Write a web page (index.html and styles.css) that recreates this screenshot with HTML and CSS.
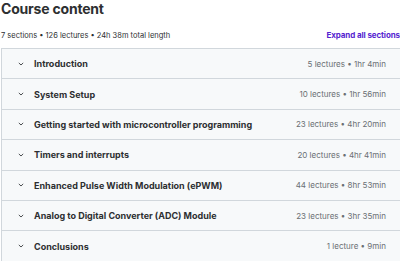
FILE: index.html
```html
<!DOCTYPE html>
<html>
   <head>
       <title>Course content</title>
       <link rel="stylesheet" href="styles.css">
   </head>
   <body>
        <div class="page">
            <h2 class="title">Course content</h2>
            <div class="summary">
                <span class="stats">7 sections &bull; 126 lectures &bull; 24h 38m total length</span>
                <span class="expand">Expand all sections</span>
            </div>

            <div class="sections">
                <div class="row">
                    <span class="chev"><svg width="6" height="4" viewBox="0 0 6 4"><path d="M0.8 0.9 L3 3 L5.2 0.9" fill="none" stroke="#4a4d50" stroke-width="1"/></svg></span>
                    <span class="name">Introduction</span>
                    <span class="meta">5 lectures &bull; 1hr 4min</span>
                </div>
                <div class="row">
                    <span class="chev"><svg width="6" height="4" viewBox="0 0 6 4"><path d="M0.8 0.9 L3 3 L5.2 0.9" fill="none" stroke="#4a4d50" stroke-width="1"/></svg></span>
                    <span class="name">System Setup</span>
                    <span class="meta">10 lectures &bull; 1hr 56min</span>
                </div>
                <div class="row">
                    <span class="chev"><svg width="6" height="4" viewBox="0 0 6 4"><path d="M0.8 0.9 L3 3 L5.2 0.9" fill="none" stroke="#4a4d50" stroke-width="1"/></svg></span>
                    <span class="name">Getting started with microcontroller programming</span>
                    <span class="meta">23 lectures &bull; 4hr 20min</span>
                </div>
                <div class="row">
                    <span class="chev"><svg width="6" height="4" viewBox="0 0 6 4"><path d="M0.8 0.9 L3 3 L5.2 0.9" fill="none" stroke="#4a4d50" stroke-width="1"/></svg></span>
                    <span class="name">Timers and interrupts</span>
                    <span class="meta">20 lectures &bull; 4hr 41min</span>
                </div>
                <div class="row">
                    <span class="chev"><svg width="6" height="4" viewBox="0 0 6 4"><path d="M0.8 0.9 L3 3 L5.2 0.9" fill="none" stroke="#4a4d50" stroke-width="1"/></svg></span>
                    <span class="name">Enhanced Pulse Width Modulation (ePWM)</span>
                    <span class="meta">44 lectures &bull; 8hr 53min</span>
                </div>
                <div class="row">
                    <span class="chev"><svg width="6" height="4" viewBox="0 0 6 4"><path d="M0.8 0.9 L3 3 L5.2 0.9" fill="none" stroke="#4a4d50" stroke-width="1"/></svg></span>
                    <span class="name">Analog to Digital Converter (ADC) Module</span>
                    <span class="meta">23 lectures &bull; 3hr 35min</span>
                </div>
                <div class="row">
                    <span class="chev"><svg width="6" height="4" viewBox="0 0 6 4"><path d="M0.8 0.9 L3 3 L5.2 0.9" fill="none" stroke="#4a4d50" stroke-width="1"/></svg></span>
                    <span class="name">Conclusions</span>
                    <span class="meta">1 lecture &bull; 9min</span>
                </div>
            </div>
        </div>
    </body>
</html>
```

FILE: styles.css
```css
html, body {
  margin: 0;
  padding: 0;
  background: #ffffff;
  overflow: hidden;
}

.page {
  width: 401px;
  padding-left: 1px;
  font-family: "Inter", "Liberation Sans", sans-serif;
  color: #2d2f31;
}

.title {
  margin: 0;
  font-size: 14px;
  font-weight: 700;
  line-height: 18px;
  letter-spacing: -0.2px;
}

.summary {
  display: flex;
  justify-content: space-between;
  align-items: baseline;
  margin-top: 12px;
  height: 18px;
  padding-right: 2px;
}

.stats {
  font-size: 7.5px;
  color: #2d2f31;
}

.expand {
  font-size: 8px;
  color: #5624d0;
  font-weight: 700;
  letter-spacing: -0.1px;
}

.sections {
  border: 1px solid #d1d7dc;
  border-bottom: none;
}

.row {
  display: flex;
  align-items: center;
  height: 29.4px;
  padding: 0 15px 0 16px;
  background: #f7f9fa;
  border-bottom: 1px solid #d1d7dc;
}

.chev {
  width: 16px;
  display: flex;
  align-items: center;
}

.name {
  flex: 1;
  font-size: 9px;
  font-weight: 700;
}

.meta {
  font-size: 8px;
  color: #6a6f73;
}
```
